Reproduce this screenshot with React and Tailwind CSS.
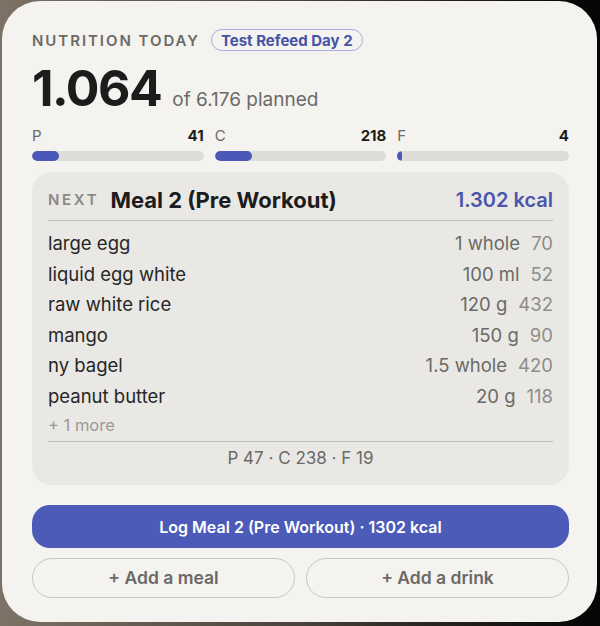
import React from "react";

const rows = [
  ["large egg", "1 whole", "70"],
  ["liquid egg white", "100 ml", "52"],
  ["raw white rice", "120 g", "432"],
  ["mango", "150 g", "90"],
  ["ny bagel", "1.5 whole", "420"],
  ["peanut butter", "20 g", "118"],
];

const macros = [
  ["P", "41", 16],
  ["C", "218", 22],
  ["F", "4", 3],
];

export default function App() {
  return (
    <div
      className="w-[600px] h-[626px] bg-gradient-to-r from-[#7d7266] via-[#4a423b] to-[#050505] pt-[1px] pl-[2px] pr-[3px]"
      style={{ fontFamily: "Inter, 'Noto Sans', sans-serif" }}
    >
      <div className="h-[621px] rounded-[38px] bg-[#f4f3ef] pl-[30px] pr-[28px] pt-[28px] flex flex-col">
        <div className="flex items-center gap-[11px] h-[22px]">
          <span className="text-[15px] font-semibold tracking-[0.13em] text-[#6b6a67] leading-none">
            NUTRITION TODAY
          </span>
          <span className="h-[22px] px-[9px] rounded-full border border-[#a9aedb] text-[#4753a6] text-[15px] font-bold flex items-center leading-none">
            Test Refeed Day 2
          </span>
        </div>

        <div className="mt-[12px] flex items-baseline gap-[11px] h-[50px]">
          <span className="text-[50px] font-bold leading-none tracking-[-0.03em] text-[#1c1c1c]">
            1.064
          </span>
          <span className="text-[19px] text-[#6b6a67] leading-none">of 6.176 planned</span>
        </div>

        <div className="mt-[13px] grid grid-cols-3 gap-[11px]">
          {macros.map(([l, v, pct]) => (
            <div key={l} className="flex flex-col">
              <div className="flex justify-between items-center h-[20px] text-[15px] leading-[20px]">
                <span className="text-[#6b6a67]">{l}</span>
                <span className="font-bold text-[#1c1c1c]">{v}</span>
              </div>
              <div className="mt-[5px] h-[10px] rounded-full bg-[#dddcd8] overflow-hidden">
                <div className="h-full rounded-full bg-[#4a58b8]" style={{ width: `${pct}%` }} />
              </div>
            </div>
          ))}
        </div>

        <div className="mt-[11px] rounded-[20px] bg-[#e9e8e4] px-[16px] pt-[14px] pb-[14px] flex flex-col">
          <div className="flex items-center h-[28px]">
            <span className="text-[15px] font-semibold tracking-[0.18em] text-[#8a8986]">NEXT</span>
            <span className="ml-[11px] text-[22px] font-bold text-[#1c1c1c]">Meal 2 (Pre Workout)</span>
            <span className="ml-auto text-[20px] font-semibold text-[#4a56ad]">1.302 kcal</span>
          </div>
          <div className="mt-[6px] h-px bg-[#bdbcb8]" />
          <div className="mt-[8px] flex flex-col">
            {rows.map(([n, a, k]) => (
              <div key={n} className="flex items-center h-[30.5px] text-[18.5px]">
                <span className="text-[#262626]">{n}</span>
                <span className="ml-auto text-[#6b6a67]">{a}</span>
                <span className="ml-[11px] text-[#8e8d8a]">{k}</span>
              </div>
            ))}
            <div className="h-[26px] flex items-center text-[16.5px] text-[#9a9996]">+ 1 more</div>
          </div>
          <div className="mt-[3px] h-px bg-[#bdbcb8]" />
          <div className="mt-[5px] h-[24px] flex items-center justify-center text-[17px] text-[#6b6a67]">
            P 47 · C 238 · F 19
          </div>
        </div>

        <button className="mt-[20px] h-[43px] rounded-[18px] bg-[#4c5bb8] text-white text-[16px] font-semibold flex items-center justify-center">
          Log Meal 2 (Pre Workout) · 1302 kcal
        </button>

        <div className="mt-[10px] grid grid-cols-2 gap-[11px]">
          <button className="h-[40px] rounded-full border border-[#c7c6c2] text-[17.5px] font-semibold text-[#6a6966] flex items-center justify-center">
            + Add a meal
          </button>
          <button className="h-[40px] rounded-full border border-[#c7c6c2] text-[17.5px] font-semibold text-[#6a6966] flex items-center justify-center">
            + Add a drink
          </button>
        </div>
      </div>
    </div>
  );
}
